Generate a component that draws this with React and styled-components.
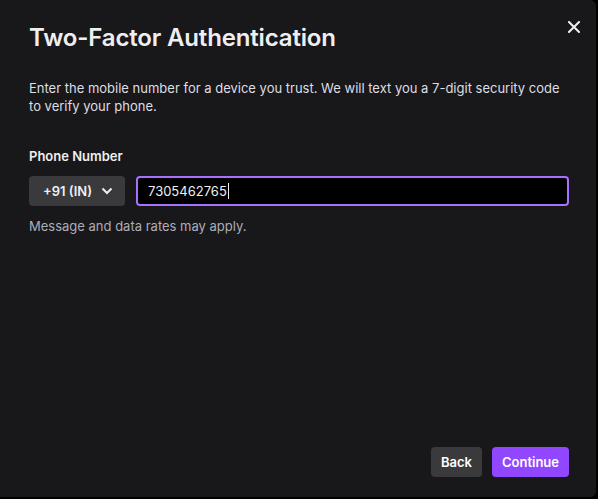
import React from "react";
import styled, { createGlobalStyle } from "styled-components";

const Global = createGlobalStyle`
  html, body { margin: 0; padding: 0; background: #000; }
  body { font-family: Inter, "Noto Sans", sans-serif; -webkit-font-smoothing: antialiased; }
  * { box-sizing: border-box; }
`;

const Modal = styled.div`
  position: relative;
  width: 596px;
  height: 497px;
  background: #18181b;
  border-radius: 0 6px 6px 0;
  padding: 22px 27px 20px 29px;
  display: flex;
  flex-direction: column;
  color: #efeff1;
`;

const Title = styled.h1`
  margin: 0;
  font-size: 24px;
  font-weight: 600;
  line-height: 32px;
  color: #efeff1;
  letter-spacing: -0.16px;
`;

const Desc = styled.p`
  margin: 25px 0 0;
  font-size: 13px;
  line-height: 18px;
  color: #dedee3;
`;

const Label = styled.div`
  margin-top: 32px;
  font-size: 13px;
  font-weight: 600;
  line-height: 18px;
  color: #efeff1;
`;

const Row = styled.div`
  margin-top: 11px;
  display: flex;
  gap: 11px;
  align-items: center;
`;

const Select = styled.div`
  width: 96px;
  height: 30px;
  background: #3a3a3d;
  border-radius: 4px;
  display: flex;
  align-items: center;
  justify-content: center;
  gap: 9px;
  font-size: 13px;
  font-weight: 600;
  color: #efeff1;
  padding-left: 2px;
`;

const Input = styled.div`
  flex: 1;
  height: 30px;
  background: #000;
  border: 2px solid #a970ff;
  border-radius: 4px;
  display: flex;
  align-items: center;
  padding-left: 10px;
  font-size: 13px;
  color: #efeff1;
`;

const Caret = styled.span`
  display: inline-block;
  width: 1px;
  height: 16px;
  background: #efeff1;
  margin-left: 1px;
`;

const Help = styled.div`
  margin-top: 11px;
  font-size: 13px;
  line-height: 18px;
  color: #adadb8;
`;

const Footer = styled.div`
  margin-top: auto;
  display: flex;
  justify-content: flex-end;
  gap: 10px;
`;

const Button = styled.button`
  height: 30px;
  border: none;
  border-radius: 4px;
  padding: 0 10px;
  font-family: inherit;
  font-size: 13px;
  font-weight: 600;
  color: #fff;
  background: ${(p) => (p.$primary ? "#9147ff" : "#3a3a3d")};
  cursor: pointer;
`;

const Close = styled.button`
  position: absolute;
  top: 19px;
  right: 14px;
  width: 16px;
  height: 16px;
  padding: 0;
  border: none;
  background: transparent;
  display: flex;
  align-items: center;
  justify-content: center;
`;

export default function App() {
  return (
    <>
      <Global />
      <Modal>
        <Close aria-label="Close">
          <svg width="12" height="12" viewBox="0 0 12 12">
            <path d="M1 1L11 11M11 1L1 11" stroke="#efeff1" strokeWidth="2" strokeLinecap="square" />
          </svg>
        </Close>
        <Title>Two-Factor Authentication</Title>
        <Desc>
          Enter the mobile number for a device you trust. We will text you a 7-digit security code
          to verify your phone.
        </Desc>
        <Label>Phone Number</Label>
        <Row>
          <Select>
            <span>+91 (IN)</span>
            <svg width="12" height="8" viewBox="0 0 12 8">
              <path d="M1.5 1.5L6 6L10.5 1.5" fill="none" stroke="#efeff1" strokeWidth="2" />
            </svg>
          </Select>
          <Input>
            7305462765
            <Caret />
          </Input>
        </Row>
        <Help>Message and data rates may apply.</Help>
        <Footer>
          <Button>Back</Button>
          <Button $primary>Continue</Button>
        </Footer>
      </Modal>
    </>
  );
}
